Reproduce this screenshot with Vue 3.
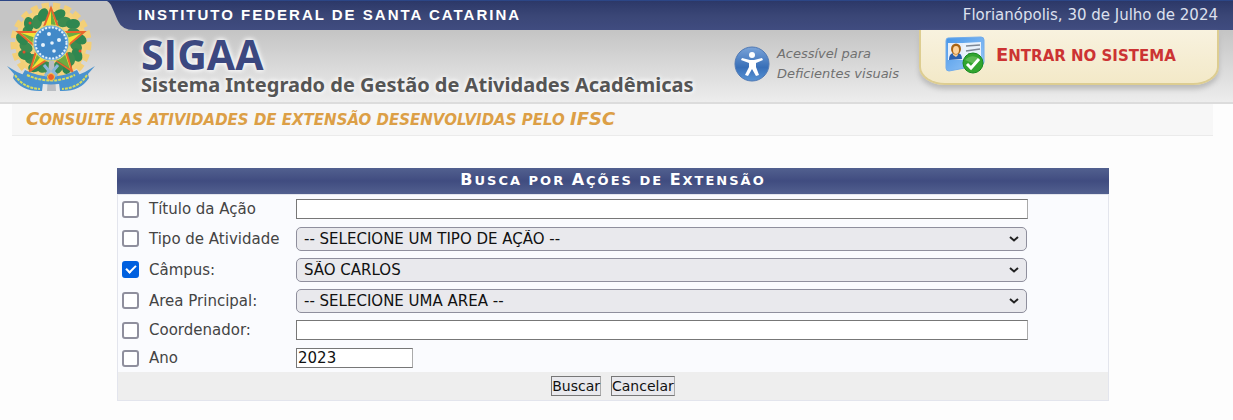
<template>
    <div class="page">
        <header class="header">
            <svg class="crest" viewBox="0 0 92 92" aria-hidden="true">
                <circle cx="46" cy="42" r="36" fill="#f5d27c" />
                <circle cx="46" cy="42" r="37" fill="none" stroke="#f3cf77" stroke-width="7" stroke-dasharray="7 4" />
                <ellipse v-for="l in leaves" :key="l.id" :cx="l.x" :cy="l.y" rx="7" ry="5" :fill="l.fill" :transform="l.turn" />
                <circle v-for="b in berries" :key="b.x" :cx="b.x" :cy="b.y" r="1.5" fill="#e2502c" />
                <path d="M46 7L55 31L79 31L60 47L67 70L46 56L25 70L32 47L13 31L37 31Z" fill="#f6e335" stroke="#e9652d" stroke-width="2" />
                <path d="M46 9V56L65 68L58 47ZM46 42L77 32L56 32ZM46 42L16 32L33 46ZM46 42L27 67L34 48Z" fill="#3f9a45" opacity=".75" />
                <circle cx="46" cy="42" r="18" fill="#6aa8dc" stroke="#e6dc68" stroke-width="1" />
                <circle cx="46" cy="42" r="15.500" fill="#4289c8" stroke="#e4f1fa" stroke-width="2" stroke-dasharray="2 1.500" />
                <g fill="#e6f2fb">
                    <circle cx="44" cy="33" r="2" />
                    <circle cx="54" cy="39" r="2" />
                    <circle cx="47" cy="42" r="1.800" />
                    <circle cx="38" cy="44" r="2" />
                    <circle cx="49" cy="50" r="1.800" />
                </g>
                <path d="M44 60H49L51 90H42Z" fill="#b9bdc2" />
                <path d="M2 65L12 71L24 76L38 82L37 90Q17 91 8 77L9 73Z" fill="#4a93cf" />
                <path d="M90 65L80 71L68 76L54 82L55 90Q75 91 84 77L83 73Z" fill="#4a93cf" />
                <path d="M20 69Q46 82 72 69L76 76Q46 91 16 76Z" fill="#4a93cf" />
                <path d="M22 74Q46 85 70 74M10 74Q18 87 35 88M82 74Q74 87 57 88" fill="none" stroke="#d5dd60" stroke-width="2" stroke-dasharray="3 1" />
                <path d="M39 64L44 70L40 75M53 64L48 70L52 75" fill="none" stroke="#88b7dc" stroke-width="3" />
                <circle cx="46" cy="76" r="3.500" fill="#e9602b" stroke="#f2c650" stroke-width="1" />
            </svg>
            <div class="main">
                <div class="topbar">
                    <svg class="curve" viewBox="0 0 31 29" preserveAspectRatio="none" aria-hidden="true">
                        <path d="M0 0H31V29H27Q15 29 11 20L4 4Q2 1 0 0Z" fill="url(#navy)" />
                        <defs>
                            <linearGradient id="navy" x1="0" y1="0" x2="0" y2="1">
                                <stop offset="0" stop-color="#2c3868" />
                                <stop offset=".5" stop-color="#3a4676" />
                                <stop offset="1" stop-color="#404c80" />
                            </linearGradient>
                        </defs>
                    </svg>
                    <div class="topbar-text">
                        <strong class="school">INSTITUTO FEDERAL DE SANTA CATARINA</strong>
                        <span class="date">Florianópolis, 30 de Julho de 2024</span>
                    </div>
                </div>
                <div class="brand-row">
                    <div class="brand">
                        <div class="sigaa">SIGAA</div>
                        <div class="tagline">Sistema Integrado de Gestão de Atividades Acadêmicas</div>
                    </div>
                    <a class="access" href="#">
                        <svg viewBox="0 0 36 36" aria-hidden="true">
                            <defs>
                                <linearGradient id="ball" x1="0" y1="0" x2="0" y2="1">
                                    <stop offset="0" stop-color="#7aa3d8" />
                                    <stop offset=".6" stop-color="#386fb8" />
                                    <stop offset="1" stop-color="#5793d4" />
                                </linearGradient>
                            </defs>
                            <circle cx="18" cy="18" r="17" fill="url(#ball)" stroke="#5079b4" />
                            <circle cx="18" cy="9" r="3" fill="#fff" />
                            <path d="M8 12L16 14H20L28 12L29 14L22 17V21L25 29L22 30L18 23L14 30L11 29L15 21V17L7 14Z" fill="#fff" />
                        </svg>
                        <span>Acessível para<br>Deficientes visuais</span>
                    </a>
                    <a class="login" href="#">
                        <svg viewBox="0 0 40 40" aria-hidden="true">
                            <defs>
                                <linearGradient id="badge" x1="0" y1="0" x2="1" y2="1">
                                    <stop offset="0" stop-color="#4595e8" />
                                    <stop offset="1" stop-color="#9fcbf8" />
                                </linearGradient>
                            </defs>
                            <path d="M3 2L36 1Q39 1 39 4V26Q39 29 36 29L4 35Q1 35 1 32V5Q1 2 3 2Z" fill="url(#badge)" stroke="#72aceb" />
                            <path d="M18 7L36 6V24L18 28Z" fill="#e9f2fc" />
                            <rect x="3" y="7" width="15" height="17" fill="#e5eefa" />
                            <path d="M4 24Q4 17 9 17H12Q17 17 17 23Z" fill="#2960af" />
                            <path d="M8 16H13V19L11 21L8 19Z" fill="#f5cd99" />
                            <ellipse cx="11" cy="13" rx="5" ry="5.500" fill="#a96414" />
                            <ellipse cx="11" cy="14" rx="3" ry="4" fill="#ffd49c" />
                            <path d="M21 10L35 9M21 15L35 13M23 18H30" stroke="#7d8795" stroke-width="1.500" />
                            <circle cx="28" cy="27" r="10" fill="#31a52f" stroke="#168920" />
                            <path d="M20 24Q27 17 35 23Q33 27 27 27Z" fill="#7ac76b" opacity=".6" />
                            <path d="M22 28L26 32L34 23" fill="none" stroke="#fff" stroke-width="3" />
                        </svg>
                        <span class="caps"><b>E</b>ntrar no sistema</span>
                    </a>
                </div>
            </div>
        </header>

        <main class="content">
            <h2 class="title caps"><b>C</b>onsulte as atividades de extensão desenvolvidas pelo <b>IFSC</b></h2>

            <form class="search" @submit.prevent>
                <table>
                    <caption class="caps"><b>B</b>usca por <b>A</b>ções de <b>E</b>xtensão</caption>
                    <tbody>
                        <tr v-for="f in fields" :key="f.id">
                            <td class="check">
                                <input type="checkbox" :id="f.id + '-check'" v-model="f.checked">
                            </td>
                            <td class="label"><label :for="f.id + '-check'">{{ f.label }}</label></td>
                            <td class="field">
                                <div v-if="f.type == 'select'" class="select">
                                    <select :id="f.id" v-model="f.value" :aria-label="f.label">
                                        <option>{{ f.value }}</option>
                                    </select>
                                    <svg viewBox="0 0 10 6" aria-hidden="true"><path d="M1 1L5 4.500L9 1" /></svg>
                                </div>
                                <input v-else type="text" :id="f.id" :class="{ short: f.type == 'year' }" v-model="f.value" :aria-label="f.label">
                            </td>
                        </tr>
                    </tbody>
                    <tfoot>
                        <tr>
                            <td colspan="3">
                                <div class="buttons">
                                    <button type="submit">Buscar</button>
                                    <button type="button">Cancelar</button>
                                </div>
                            </td>
                        </tr>
                    </tfoot>
                </table>
            </form>
        </main>
    </div>
</template>

<script setup>
import { reactive } from 'vue'

const fields = reactive([
    { id: 'titulo', label: 'Título da Ação', type: 'text', value: '', checked: false },
    { id: 'tipo', label: 'Tipo de Atividade', type: 'select', value: '-- SELECIONE UM TIPO DE AÇÃO --', checked: false },
    { id: 'campus', label: 'Câmpus:', type: 'select', value: 'SÃO CARLOS', checked: true },
    { id: 'area', label: 'Area Principal:', type: 'select', value: '-- SELECIONE UMA AREA --', checked: false },
    { id: 'coordenador', label: 'Coordenador:', type: 'text', value: '', checked: false },
    { id: 'ano', label: 'Ano', type: 'year', value: '2023', checked: false }
])

// wreath around the star
const leaves = []
for (let i = 0; i < 22; i++) {
    const a = (i * 360) / 22 + 8
    const r = i % 2 ? 29 : 25
    const x = Math.round(46 + r * Math.cos((a * Math.PI) / 180))
    const y = Math.round(42 + r * Math.sin((a * Math.PI) / 180))
    leaves.push({ id: i, x, y, fill: i % 2 ? '#2f8750' : '#3c8b50', turn: `rotate(${a + 40} ${x} ${y})` })
}
const berries = [
    { x: 25, y: 22 },
    { x: 19, y: 51 },
    { x: 75, y: 50 }
]
</script>

<style>
body {
    background: #fdfdfd;
}
</style>

<style scoped>
.page {
    font-family: Verdana, "DejaVu Sans", sans-serif;
    font-size: 15px;
    color: #444;
}

.header {
    display: flex;
    height: 104px;
    box-sizing: border-box;
    border-top: 1px solid #2c4686;
    border-bottom: 2px solid #dcdcdc;
    background: linear-gradient(#c5c5c5 30%, #ededed);
}

.crest {
    flex: none;
    width: 92px;
    height: 92px;
    margin: 0 10px 0 5px;
}

.main {
    flex: 1;
}

.topbar {
    display: flex;
    height: 29px;
}

.curve {
    width: 31px;
    height: 29px;
}

.topbar-text {
    flex: 1;
    display: flex;
    align-items: center;
    justify-content: space-between;
    padding: 0 15px 2px 0;
    background: linear-gradient(#2c3868, #3a4676 50%, #404c80);
    color: #fff;
}

.school {
    font: bold 15px "Liberation Sans", Arial, sans-serif;
    letter-spacing: 2px;
}

.date {
    color: #dde0ee;
}

/* small capitals, a little larger than the browser's own */
.caps {
    text-transform: uppercase;
    font-weight: bold;
    font-size: 15px;
}

.caps b {
    font-size: 18px;
    line-height: 1;
}

.brand-row {
    display: flex;
    align-items: flex-start;
    padding: 0 14px 0 34px;
}

.brand {
    flex: 1;
    font-family: "Noto Sans", sans-serif;
    font-weight: bold;
    text-shadow: 0 0 4px #fff, 0 0 6px #fff;
    white-space: nowrap;
}

.sigaa {
    padding-top: 5px;
    font-family: "Open Sans", sans-serif;
    font-size: 41px;
    line-height: 38px;
    color: #3c4880;
}

.tagline {
    font-size: 20px;
    line-height: 24px;
    color: #555;
}

.access {
    display: flex;
    align-items: center;
    gap: 7px;
    padding-top: 14px;
    margin-right: 20px;
    font-size: 13px;
    font-style: italic;
    line-height: 20px;
    color: #707070;
    text-decoration: none;
    white-space: nowrap;
}

.access svg {
    width: 36px;
    height: 36px;
}

.login {
    display: flex;
    align-items: center;
    gap: 11px;
    width: 300px;
    height: 55px;
    box-sizing: border-box;
    padding: 0 24px 2px;
    border: solid #ddcd91;
    border-width: 0 2px 2px;
    border-radius: 0 0 26px 26px / 0 0 18px 18px;
    background: linear-gradient(#f8f2df, #f3e9c8);
    box-shadow: 0 4px 5px #bbb;
    color: #cc3333;
    text-decoration: none;
    white-space: nowrap;
}

.login svg {
    flex: none;
    width: 40px;
    height: 40px;
}

.content {
    padding: 0 20px 0 12px;
}

.title {
    margin: 0;
    padding: 2px 14px 0;
    border-bottom: 1px solid #ebebeb;
    background: #f7f7f7;
    font-style: italic;
    line-height: 29px;
    color: #dc9f46;
}

.search {
    padding: 32px 104px 0 105px;
}

table {
    width: 100%;
    border-collapse: separate;
    border-spacing: 0;
    border: 1px solid #e3e5ed;
    background: #fafbfe;
}

caption {
    background: linear-gradient(#52608f, #404c80 50%, #52608f);
    color: #fff;
    letter-spacing: 2px;
    line-height: 26px;
}

caption.caps {
    font-size: 13px;
}

caption.caps b {
    font-size: 16px;
}

td {
    padding: 0;
    height: 28px;
}

tr:has(.select) td {
    height: 31px;
}

.check {
    width: 31px;
}

.label {
    width: 147px;
}

.field {
    padding-right: 80px;
}

input,
select,
button {
    box-sizing: border-box;
    font: inherit;
    color: #111;
}

input[type="checkbox"] {
    appearance: none;
    display: grid;
    place-items: center;
    width: 17px;
    height: 17px;
    margin: 0 0 0 4px;
    border: 2px solid #8f8f9d;
    border-radius: 3px;
    background: #fff;
}

input[type="checkbox"]:checked {
    border-color: #0060df;
    background: #0060df;
}

input[type="checkbox"]:checked::before {
    content: "";
    width: 8px;
    height: 4px;
    margin-bottom: 3px;
    border: solid #fff;
    border-width: 0 0 2px 2px;
    transform: rotate(-45deg);
}

input[type="text"] {
    display: block;
    width: 100%;
    height: 20px;
    padding: 0 1px;
    border: 1px solid #777;
    border-right-color: #aaa;
    background: #fff;
}

input.short {
    width: 117px;
}

.select {
    display: grid;
    align-items: center;
    margin-right: 1px;
}

.select select {
    grid-area: 1 / 1;
    appearance: none;
    height: 24px;
    padding: 0 7px;
    border: 1px solid #8f8f9d;
    border-radius: 5px;
    background: #e9e9ed;
}

.select svg {
    grid-area: 1 / 1;
    justify-self: end;
    width: 10px;
    height: 6px;
    margin-right: 8px;
    pointer-events: none;
    fill: none;
    stroke: #222;
    stroke-width: 2;
}

tfoot td {
    background: #eee;
}

.buttons {
    display: flex;
    justify-content: center;
    gap: 10px;
}

button {
    height: 20px;
    padding: 0;
    border: 1px solid #777;
    border-right-color: #aaa;
    background: #e9e9ed;
    font-size: 14px;
    line-height: 18px;
}
</style>
